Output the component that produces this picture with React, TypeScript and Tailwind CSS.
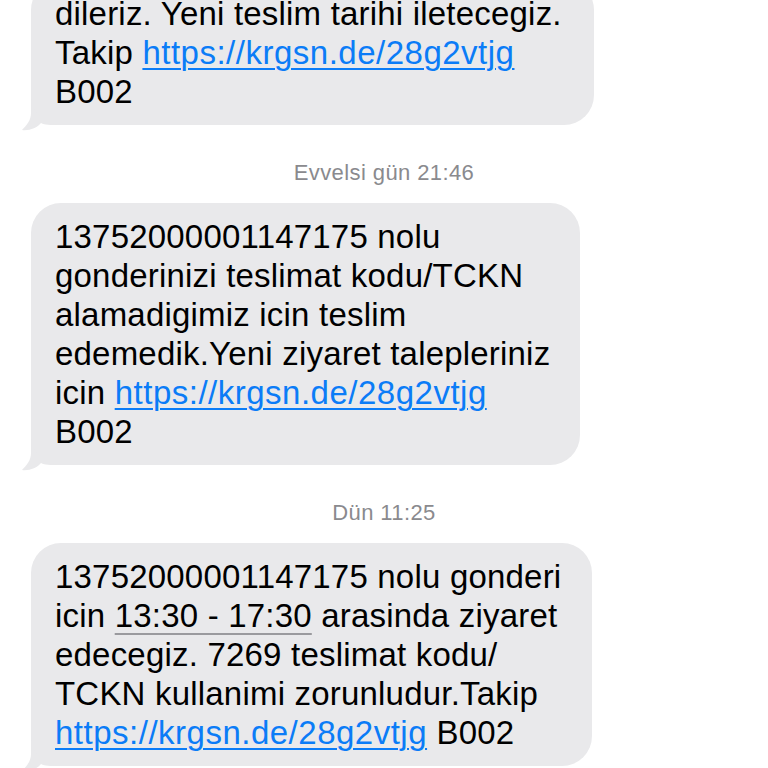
import React from 'react'

// iOS-style incoming SMS thread

const font = { fontFamily: '"Liberation Sans", Arial, sans-serif' }

function Link({ children }: { children: React.ReactNode }) {
    return (
        <span className="text-[#0b7cf7] tracking-[0.5px] underline decoration-[1.5px] underline-offset-[4px]">
            {children}
        </span>
    )
}

function Tail() {
    return (
        <svg
            className="absolute -left-[10px] -bottom-[6px]"
            width="40"
            height="46"
            viewBox="0 0 40 46"
        >
            <path
                d="M10 0 L10 28 C10 35 6 40 1 45 C8 46 16 43 20 38 C24 40 28 40 40 40 L40 0 Z"
                fill="#e9e9eb"
            />
        </svg>
    )
}

function Bubble({ width, className = '', lines }: { width: string; className?: string; lines: React.ReactNode[] }) {
    return (
        <div className={`relative ${width} ${className}`}>
            <div className="relative z-10 rounded-[30px] bg-[#e9e9eb] py-[14px] pl-[24px]">
                {lines.map((line, i) => (
                    <div key={i} className="whitespace-nowrap text-[33px] leading-[39px] tracking-[0.2px] text-black">
                        {line}
                    </div>
                ))}
            </div>
            <Tail />
        </div>
    )
}

function Stamp({ text }: { text: string }) {
    return (
        <div className="mt-[36px] mb-[18px] text-center text-[22px] leading-[24px] tracking-[0.4px] font-medium text-[#8a8a8e]">
            {text}
        </div>
    )
}

export default function App() {
    return (
        <div className="h-[768px] w-[768px] overflow-hidden bg-white pl-[31px]" style={font}>
            <Bubble
                width="w-[563px]"
                className="-mt-[20px]"
                lines={[
                    'dileriz. Yeni teslim tarihi iletecegiz.',
                    <>Takip <Link>https://krgsn.de/28g2vtjg</Link></>,
                    'B002',
                ]}
            />

            <div className="-ml-[31px]">
                <Stamp text="Evvelsi gün 21:46" />
            </div>

            <Bubble
                width="w-[549px]"
                lines={[
                    '13752000001147175 nolu',
                    'gonderinizi teslimat kodu/TCKN',
                    'alamadigimiz icin teslim',
                    'edemedik.Yeni ziyaret talepleriniz',
                    <>icin <Link>https://krgsn.de/28g2vtjg</Link></>,
                    'B002',
                ]}
            />

            <div className="-ml-[31px]">
                <Stamp text="Dün 11:25" />
            </div>

            <Bubble
                width="w-[561px]"
                className="mt-[2px]"
                lines={[
                    '13752000001147175 nolu gonderi',
                    <>
                        icin{' '}
                        <span className="underline decoration-[#9a9a9e] decoration-[2px] underline-offset-[6px]">
                            13:30 - 17:30
                        </span>{' '}
                        arasinda ziyaret
                    </>,
                    'edecegiz. 7269 teslimat kodu/',
                    'TCKN kullanimi zorunludur.Takip',
                    <><Link>https://krgsn.de/28g2vtjg</Link> B002</>,
                ]}
            />
        </div>
    )
}
